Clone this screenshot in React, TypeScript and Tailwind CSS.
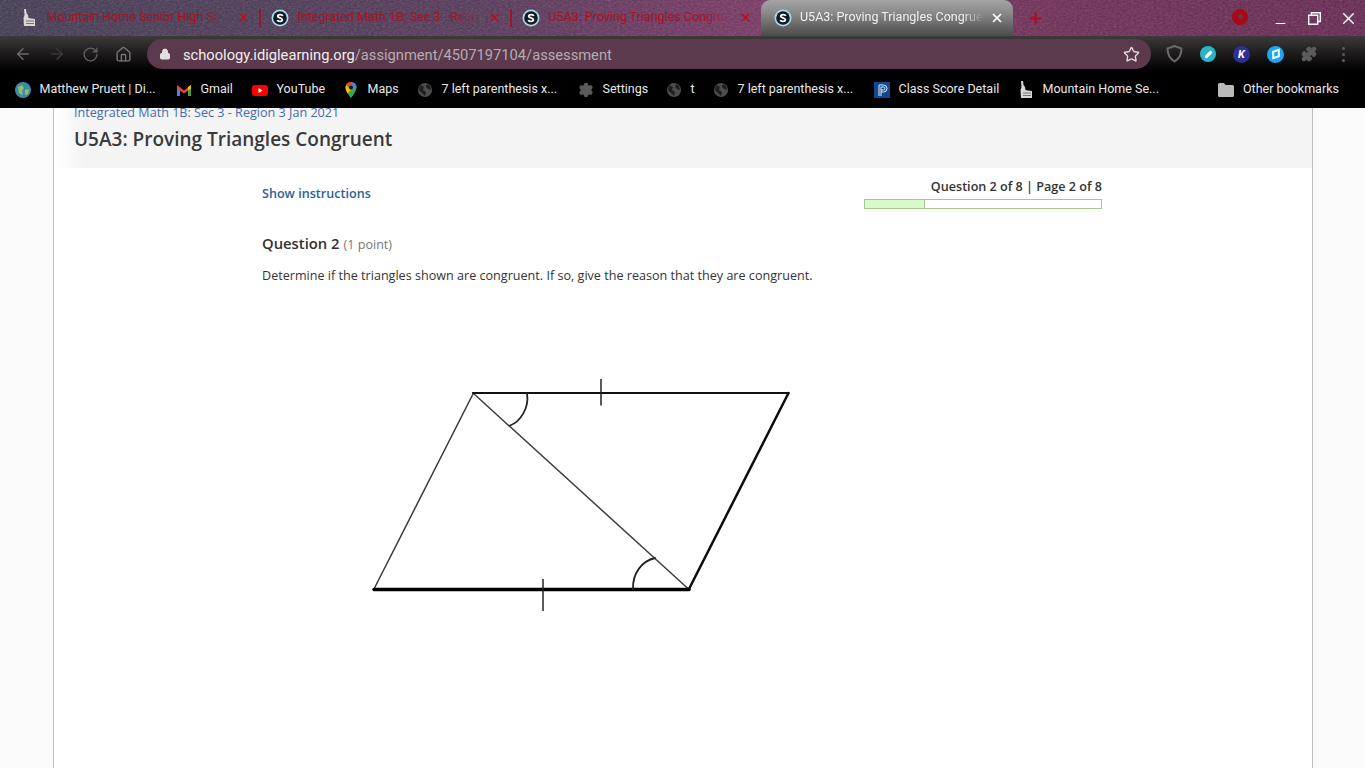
import React from 'react';
import { ArrowLeft, ArrowRight, RotateCw, Home, Lock, Star, Minus, X, Plus, Settings, Puzzle } from 'lucide-react';

const SchoologyIcon = () => (
    <svg width="18" height="18" viewBox="0 0 18 18" className="shrink-0">
        <circle cx="9" cy="9" r="8.5" fill="#a6dcee" />
        <circle cx="9" cy="9" r="6.8" fill="#141a22" />
        <path d="M11.800 6.800C11 5.300 6.800 5.200 6.700 7.200 6.600 9.300 11.500 8.500 11.400 10.800 11.300 12.900 7 12.800 6.200 11.100" fill="none" stroke="#fff" strokeWidth="1.800" />
    </svg>
);

const IdahoIcon = () => (
    <svg width="16" height="18" viewBox="0 0 16 18" className="shrink-0">
        <path d="M3 0 L5 0 L5.500 4 L7 6 L7.500 9 L10 9.500 L14 10 L14 17 L3 17 L2.500 9 L3.500 6 Z" fill="#d9d6d4" />
        <path d="M5 12h8M5 14.500h8" stroke="#77716f" strokeWidth="1" />
    </svg>
);

const GlobeIcon = () => (
    <svg width="16" height="16" viewBox="0 0 16 16" className="shrink-0">
        <circle cx="8" cy="8" r="7" fill="#4d4d4d" />
        <path d="M3 3l4 2-1 3 3 2-1 4-3-3-3-3zM10 2l3 2 1 4-3-1-2-2z" fill="#1f1f1f" />
    </svg>
);

const bookmarks: { icon: React.ReactNode; label: string; width: string }[] = [
    {
        icon: (
            <svg width="16" height="16" viewBox="0 0 16 16" className="shrink-0">
                <circle cx="8" cy="8" r="8" fill="#3d8ca3" />
                <path d="M3 5l4-2 2 3-2 3 1 4-4-2zM10 8l4-1-1 5-3 1z" fill="#8fbf6c" />
            </svg>
        ),
        label: 'Matthew Pruett | Di...',
        width: 'w-[161px]',
    },
    {
        icon: (
            <svg width="16" height="16" viewBox="0 0 16 16" className="shrink-0">
                <path d="M1 3v11h3V7z" fill="#4285f4" />
                <path d="M15 3v11h-3V7z" fill="#34a853" />
                <path d="M1 3l7 5.500L15 3v3.500L8 11.500 1 6.500z" fill="#ea4335" />
                <path d="M12 5l3-2v3.500l-3 2z" fill="#fbbc04" />
            </svg>
        ),
        label: 'Gmail',
        width: 'w-[76px]',
    },
    {
        icon: (
            <svg width="16" height="16" viewBox="0 0 16 16" className="shrink-0">
                <rect x="0" y="3" width="16" height="11" rx="3" fill="#f00" />
                <path d="M6.500 6v5l4-2.500z" fill="#fff" />
            </svg>
        ),
        label: 'YouTube',
        width: 'w-[91px]',
    },
    {
        icon: (
            <svg width="16" height="16" viewBox="0 0 16 16" className="shrink-0">
                <path d="M8 0a5.500 5.500 0 0 0-5.500 5.500C2.500 9.500 8 16 8 16s5.500-6.500 5.500-10.500A5.500 5.500 0 0 0 8 0z" fill="#34a853" />
                <path d="M8 0a5.500 5.500 0 0 1 5.500 5.500L8 8z" fill="#4285f4" />
                <path d="M3 3l5 5-3.500 3.500C3.500 9.500 2.500 7.500 2.500 5.500z" fill="#fbbc04" />
                <path d="M3 3a5.500 5.500 0 0 1 5-3l2 3z" fill="#ea4335" />
                <circle cx="8" cy="5.500" r="2" fill="#1b1b1b" />
            </svg>
        ),
        label: 'Maps',
        width: 'w-[74px]',
    },
    { icon: <GlobeIcon />, label: '7 left parenthesis x...', width: 'w-[161px]' },
    { icon: <Settings size={16} className="shrink-0 text-[#1c1c1c]" fill="#5c5c5c" stroke="#5c5c5c" />, label: 'Settings', width: 'w-[88px]' },
    { icon: <GlobeIcon />, label: 't', width: 'w-[47px]' },
    { icon: <GlobeIcon />, label: '7 left parenthesis x...', width: 'w-[161px]' },
    {
        icon: (
            <svg width="16" height="16" viewBox="0 0 16 16" className="shrink-0">
                <rect width="16" height="16" fill="#12488f" />
                <path d="M5 14V3h4.500a3.500 3.500 0 0 1 0 7H7M7 14V5h2.500a1.500 1.500 0 0 1 0 3H7" fill="none" stroke="#e6eef8" strokeWidth="1" />
            </svg>
        ),
        label: 'Class Score Detail',
        width: 'w-[144px]',
    },
    { icon: <IdahoIcon />, label: 'Mountain Home Se...', width: 'w-[200px]' },
];

const tabs = [
    { icon: <IdahoIcon />, title: 'Mountain Home Senior High Sc', sep: true },
    { icon: <SchoologyIcon />, title: 'Integrated Math 1B: Sec 3 - Region 3 Jan', sep: true },
    { icon: <SchoologyIcon />, title: 'U5A3: Proving Triangles Congruent', sep: false },
];

const Diagram = () => (
    <svg width="440" height="250" viewBox="360 370 440 250" className="ml-[98px] mt-[85px] block" fill="none" strokeLinecap="round">
        <path d="M473.500 393 L374 589" stroke="#3a3a3a" strokeWidth="1.500" />
        <path d="M473 393 L688.500 589" stroke="#3f3f3f" strokeWidth="1.500" />
        <path d="M473 393 H788.500" stroke="#111" strokeWidth="2" />
        <path d="M788.500 393 L689 589" stroke="#0c0c0c" strokeWidth="2.500" />
        <path d="M374 589.500 H689" stroke="#000" strokeWidth="3.500" />
        <path d="M601 379.500 V405" stroke="#222" strokeWidth="1.500" />
        <path d="M543 579.500 V610.500" stroke="#222" strokeWidth="1.500" />
        <path d="M527 393.500 C529.500 408 520 422 510 425.500" stroke="#222" strokeWidth="1.800" />
        <path d="M633 589 C632.500 573 642 561 655 558" stroke="#222" strokeWidth="1.800" />
    </svg>
);

const App: React.FC = () => {
    return (
        <div className="h-[768px] w-[1365px] overflow-hidden flex flex-col bg-white font-['Roboto',sans-serif]">
            {/* tab strip */}
            <div className="relative h-[36px] shrink-0 flex bg-[linear-gradient(90deg,#3f3850_0%,#523556_35%,#763361_55%,#6e2a55_75%,#63244e_100%)]">
                <svg className="absolute inset-0 w-full h-full opacity-25" aria-hidden="true">
                    <filter id="grain">
                        <feTurbulence type="fractalNoise" baseFrequency="0.35 0.6" numOctaves="3" />
                        <feColorMatrix type="saturate" values="0" />
                    </filter>
                    <rect width="100%" height="100%" filter="url(#grain)" />
                </svg>
                <div className="relative flex pl-[20px] h-full pb-[1px]">
                    {tabs.map((t, i) => (
                        <div key={i} className="w-[251px] h-full flex items-center gap-[9px] pl-[1px]">
                            <div className="w-[16px] flex justify-center">{t.icon}</div>
                            <span className="w-[181px] overflow-hidden whitespace-nowrap text-[12.5px] text-[#a8111f] [mask-image:linear-gradient(90deg,#000_85%,transparent)]">{t.title}</span>
                            <X size={13} strokeWidth={3} className="text-[#b3131f] shrink-0 ml-[1px]" />
                            {t.sep && <div className="w-[2px] h-[18px] bg-[#96182f]" />}
                        </div>
                    ))}
                </div>
                <div className="relative w-[252px] h-full ml-[-12px] pb-[1px] rounded-t-[9px] bg-[linear-gradient(180deg,#a5a5a5_0%,#8a8a8a_35%,#4b4b4b_100%)] flex items-center pl-[13px] gap-[8px]">
                    <SchoologyIcon />
                    <span className="w-[184px] overflow-hidden whitespace-nowrap text-[12.5px] text-[#f1f1f1] [mask-image:linear-gradient(90deg,#000_88%,transparent)]">U5A3: Proving Triangles Congruent</span>
                    <X size={14} strokeWidth={3} className="text-white ml-[-2px]" />
                </div>
                <Plus size={17} strokeWidth={3} className="relative self-center ml-[14px] text-[#a8111f]" />
                <div className="relative ml-auto flex items-center">
                    <div className="w-[16px] h-[16px] mr-[15px] mb-[3px] rounded-full bg-[#a80a14] flex items-center justify-center">
                        <div className="w-[5px] h-[5px] rounded-full bg-[#7a2a4a]" />
                    </div>
                    <div className="w-[34px] flex justify-center pt-[11px]">
                        <Minus size={15} strokeWidth={1.8} className="text-white" />
                    </div>
                    <div className="w-[34px] flex justify-center">
                        <svg width="13" height="13" viewBox="0 0 13 13" fill="none" stroke="#fff" strokeWidth="1.400">
                            <rect x="0.700" y="3.200" width="9" height="9" />
                            <path d="M3.500 3V0.700H12.300V9.500H10" />
                        </svg>
                    </div>
                    <div className="w-[34px] flex justify-center">
                        <X size={19} strokeWidth={1.8} className="text-white" />
                    </div>
                </div>
            </div>

            {/* toolbar */}
            <div className="h-[36px] shrink-0 flex items-center bg-[linear-gradient(180deg,#3d3a3c_0%,#1c1a1b_50%,#000_100%)]">
                <div className="w-[147px] flex items-center pl-[14px] gap-[16px]">
                    <ArrowLeft size={18} className="text-[#6b6b6b]" />
                    <ArrowRight size={18} className="text-[#3d3d3d]" />
                    <RotateCw size={17} className="text-[#5f5f5f]" />
                    <Home size={17} className="text-[#757575]" />
                </div>
                <div className="w-[1004px] h-[30px] rounded-full bg-[#5a3a4c] flex items-center pl-[12px] pr-[11px]">
                    <Lock size={12} fill="#e2dde0" className="text-[#e2dde0] shrink-0" />
                    <span className="ml-[12px] pt-[2px] text-[14.7px] text-[#f2eef0]">schoology.idiglearning.org<span className="text-[#b8aab2]">/assignment/4507197104/assessment</span></span>
                    <Star size={17} className="ml-auto text-[#dfd8dc]" />
                </div>
                <div className="flex-1 flex items-center pl-[15px] gap-[17px]">
                    <svg width="17" height="18" viewBox="0 0 17 18" fill="none" stroke="#6a6a6a" strokeWidth="2"><path d="M1.500 3.500 8.500 1l7 2.500c0 5-2 10-7 13-5-3-7-8-7-13z" /></svg>
                    <div className="w-[16px] h-[16px] rounded-full bg-[#2bb4c8] flex items-center justify-center">
                        <div className="w-[9px] h-[3px] bg-white rotate-[-45deg] rounded-sm" />
                    </div>
                    <div className="w-[17px] h-[17px] rounded-full bg-[#2e3192] flex items-center justify-center text-[11px] font-bold italic leading-none text-white">K</div>
                    <div className="w-[17px] h-[17px] rounded-full bg-[#1ea7f0] flex items-center justify-center">
                        <div className="w-[8px] h-[8px] border-2 border-white skew-x-[-20deg] rotate-[-20deg]" />
                    </div>
                    <Puzzle size={16} fill="#5c5c5c" className="text-[#5c5c5c]" />
                    <div className="flex flex-col gap-[3px] ml-[8px]">
                        <div className="w-[3px] h-[3px] rounded-full bg-[#5c5c5c]" />
                        <div className="w-[3px] h-[3px] rounded-full bg-[#5c5c5c]" />
                        <div className="w-[3px] h-[3px] rounded-full bg-[#5c5c5c]" />
                    </div>
                </div>
            </div>

            {/* bookmarks */}
            <div className="h-[36px] shrink-0 flex items-center bg-black pl-[15px] pb-[1px] text-[12.5px] text-[#e8e8e8] whitespace-nowrap">
                {bookmarks.map((b, i) => (
                    <div key={i} className={`flex items-center gap-[8.5px] ${b.width}`}>
                        {b.icon}
                        <span>{b.label}</span>
                    </div>
                ))}
                <div className="flex items-center gap-[9px]">
                    <svg width="16" height="14" viewBox="0 0 16 14" className="shrink-0"><path d="M1.500 0H6l1.500 2h7A1.500 1.500 0 0 1 16 3.500v9a1.500 1.500 0 0 1-1.500 1.500h-13A1.500 1.500 0 0 1 0 12.500v-11A1.500 1.500 0 0 1 1.500 0z" fill="#b9b9b9" /></svg>
                    <span>Other bookmarks</span>
                </div>
            </div>

            {/* page */}
            <div className="flex-1 min-h-0 bg-[#fafafa] pl-[53px] pr-[52px] overflow-hidden font-['Open_Sans',sans-serif]">
                <div className="h-full border-x border-[#bdbdbd] bg-white">
                    <div className="h-[60px] bg-[linear-gradient(90deg,#fff_0,#f4f4f4_30px)] pl-[20px] overflow-hidden">
                        <div className="mt-[-4px] text-[12.6px] leading-[18px] text-[#3f6ea8]">Integrated Math 1B: Sec 3 - Region 3 Jan 2021</div>
                        <h1 className="mt-[3px] text-[19px] leading-[28px] font-semibold text-[#3a3a3a]">U5A3: Proving Triangles Congruent</h1>
                    </div>
                    <div className="w-[840px] ml-[208px]">
                        <div className="flex justify-between">
                            <a className="mt-[17px] text-[12.6px] leading-[18px] font-semibold text-[#2f6095]">Show instructions</a>
                            <div className="mt-[10px] w-[238px] flex flex-col items-end">
                                <div className="text-[12.6px] leading-[18px] font-semibold text-[#333] whitespace-nowrap">Question 2 of 8 | Page 2 of 8</div>
                                <div className="mt-[3px] w-full h-[10px] border border-[#a6c88e] bg-white">
                                    <div className="w-[60px] h-full bg-[#d9f8cc] border-r border-[#a6c88e]" />
                                </div>
                            </div>
                        </div>
                        <div className="mt-[22px] leading-[24px] whitespace-nowrap">
                            <span className="text-[14.8px] font-semibold text-[#333]">Question 2</span>
                            <span className="ml-[4px] text-[12.6px] text-[#777]">(1 point)</span>
                        </div>
                        <p className="mt-[10px] text-[12.6px] leading-[18px] text-[#333]">Determine if the triangles shown are congruent. If so, give the reason that they are congruent.</p>
                        <Diagram />
                    </div>
                </div>
            </div>
        </div>
    );
};

export default App;
